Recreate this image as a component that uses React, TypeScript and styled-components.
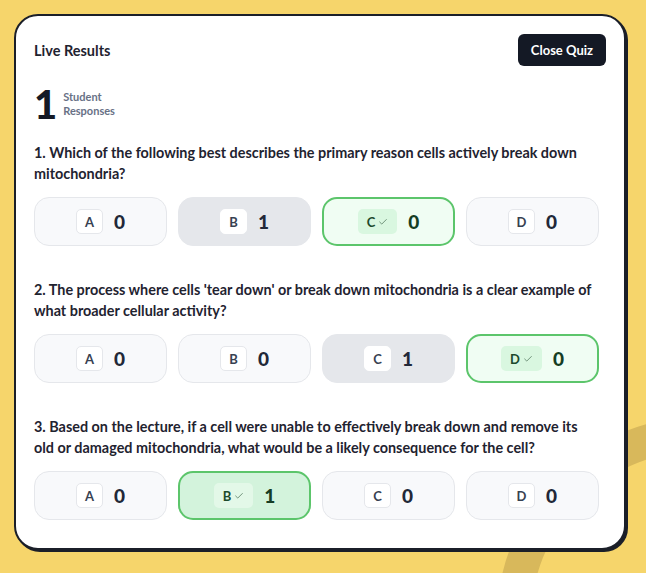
import styled, { createGlobalStyle, css } from "styled-components";
import { Check } from "lucide-react";

const GlobalStyle = createGlobalStyle`
  html, body {
    margin: 0;
    padding: 0;
  }
  body {
    font-family: "Lato", "Noto Sans", sans-serif;
    background: #f6d56b;
    -webkit-font-smoothing: antialiased;
  }
`;

const Page = styled.div`
  position: relative;
  width: 646px;
  height: 573px;
  overflow: hidden;
  background: #f6d56b;
  padding: 14px 0 0 14px;
  box-sizing: border-box;
`;

// decorative ring behind the card, bottom right
const Ring = styled.div`
  position: absolute;
  left: 497px;
  top: 417px;
  width: 406px;
  height: 406px;
  border-radius: 50%;
  border: 34px solid #d8b85b;
  box-sizing: border-box;
`;

const Card = styled.div`
  position: relative;
  z-index: 1;
  width: 612px;
  height: 536px;
  box-sizing: border-box;
  background: #fff;
  border: 2px solid #1b1f29;
  border-radius: 24px;
  box-shadow: 2px 2px 0 #1b1f29;
  padding: 18px;
`;

const Header = styled.div`
  display: flex;
  justify-content: space-between;
  align-items: center;
  height: 32px;
`;

const Title = styled.h1`
  margin: 0;
  font-size: 14.5px;
  font-weight: 700;
  color: #1f2330;
`;

const CloseButton = styled.button`
  height: 32px;
  padding: 0 13px;
  border: none;
  border-radius: 6px;
  background: #141925;
  color: #fff;
  font-family: inherit;
  font-size: 13px;
  font-weight: 700;
  cursor: pointer;
`;

const Stats = styled.div`
  display: flex;
  align-items: center;
  gap: 6px;
  margin-top: 20px;
`;

const BigNum = styled.span`
  font-size: 40px;
  font-weight: 900;
  line-height: 36px;
  color: #151a26;
`;

const StatLabel = styled.span`
  font-size: 11px;
  font-weight: 700;
  line-height: 14px;
  color: #687186;
`;

const QuestionBlock = styled.section`
  margin-top: 20px;
  padding-right: 7px;

  & + & {
    margin-top: 33px;
  }
`;

const QuestionText = styled.p`
  margin: 0;
  font-size: 14.4px;
  font-weight: 700;
  line-height: 21px;
  color: #1f2330;
`;

const Options = styled.div`
  display: grid;
  grid-template-columns: repeat(4, 1fr);
  gap: 11px;
  margin-top: 13px;
`;

const Option = styled.div<{ $chosen: boolean; $correct: boolean }>`
  height: 49px;
  box-sizing: border-box;
  border-radius: 15px;
  display: flex;
  align-items: center;
  justify-content: center;
  gap: 11px;
  border: 1.5px solid #e5e7eb;
  background: #f8f9fb;
  color: #222838;

  ${(p) =>
    p.$chosen &&
    css`
      background: #e5e7eb;
    `}

  ${(p) =>
    p.$correct &&
    css`
      border: 2px solid #5cc56b;
      background: ${p.$chosen ? "#d3f3dc" : "#f0fdf3"};
      color: #163d24;
    `}
`;

const Badge = styled.span<{ $chosen: boolean; $correct: boolean }>`
  display: inline-flex;
  align-items: center;
  justify-content: center;
  gap: 3px;
  height: 25px;
  min-width: 27px;
  padding: 0 7px;
  box-sizing: border-box;
  border-radius: 5px;
  border: 1px solid ${(p) => (p.$chosen ? "#ffffff" : "#e5e7eb")};
  background: #fff;
  font-size: 13px;
  font-weight: 700;
  color: #374151;

  ${(p) =>
    p.$correct &&
    css`
      border-color: transparent;
      background: ${p.$chosen ? "#e3f8e8" : "#d9f7e0"};
      color: #1c4a2c;
      padding: 0 8px;
    `}
`;

const Count = styled.span`
  font-size: 19px;
  font-weight: 900;
  line-height: 1;
`;

type OptionData = { letter: string; count: number; correct?: boolean };

const questions: { text: string; options: OptionData[] }[] = [
  {
    text: "1. Which of the following best describes the primary reason cells actively break down mitochondria?",
    options: [
      { letter: "A", count: 0 },
      { letter: "B", count: 1 },
      { letter: "C", count: 0, correct: true },
      { letter: "D", count: 0 },
    ],
  },
  {
    text: "2. The process where cells 'tear down' or break down mitochondria is a clear example of what broader cellular activity?",
    options: [
      { letter: "A", count: 0 },
      { letter: "B", count: 0 },
      { letter: "C", count: 1 },
      { letter: "D", count: 0, correct: true },
    ],
  },
  {
    text: "3. Based on the lecture, if a cell were unable to effectively break down and remove its old or damaged mitochondria, what would be a likely consequence for the cell?",
    options: [
      { letter: "A", count: 0 },
      { letter: "B", count: 1, correct: true },
      { letter: "C", count: 0 },
      { letter: "D", count: 0 },
    ],
  },
];

export default function App() {
  return (
    <Page>
      <GlobalStyle />
      <Ring />
      <Card>
        <Header>
          <Title>Live Results</Title>
          <CloseButton>Close Quiz</CloseButton>
        </Header>

        <Stats>
          <BigNum>1</BigNum>
          <StatLabel>
            Student
            <br />
            Responses
          </StatLabel>
        </Stats>

        {questions.map((q) => (
          <QuestionBlock key={q.text}>
            <QuestionText>{q.text}</QuestionText>
            <Options>
              {q.options.map((o) => {
                const chosen = o.count > 0;
                const correct = !!o.correct;
                return (
                  <Option key={o.letter} $chosen={chosen} $correct={correct}>
                    <Badge $chosen={chosen} $correct={correct}>
                      {o.letter}
                      {correct && <Check size={10} strokeWidth={2} color="#5b7f66" />}
                    </Badge>
                    <Count>{o.count}</Count>
                  </Option>
                );
              })}
            </Options>
          </QuestionBlock>
        ))}
      </Card>
    </Page>
  );
}
